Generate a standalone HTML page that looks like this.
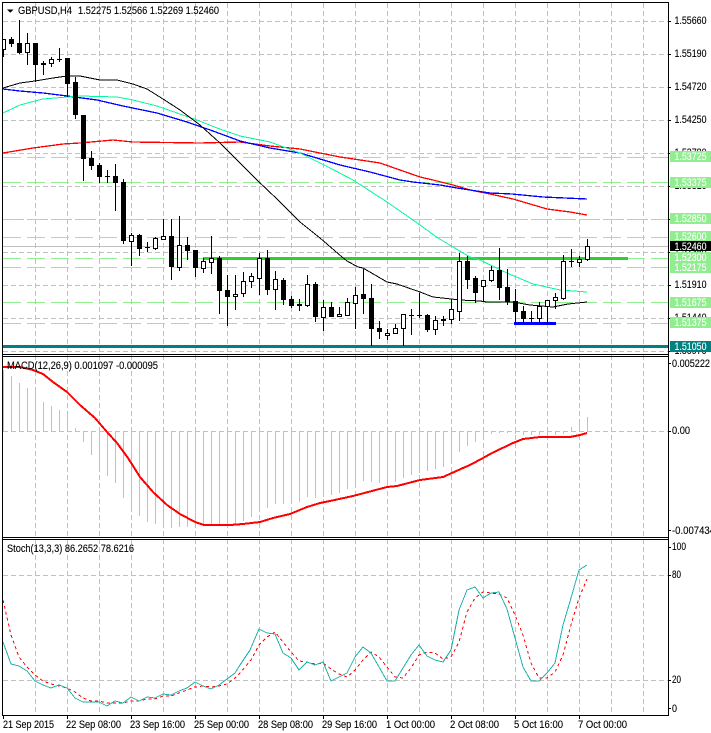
<!DOCTYPE html>
<html lang="en">
<head>
<meta charset="utf-8">
<title>GBPUSD,H4</title>
<style>
html,body{margin:0;padding:0;background:#fff;width:711px;height:733px;overflow:hidden}
svg{display:block}
text{font-family:"Liberation Sans",sans-serif;font-size:11px;fill:#000;stroke:#000;stroke-width:.12px}
text.w{fill:#fff;stroke:#fff}
.c{shape-rendering:crispEdges}
</style>
</head>
<body>
<svg width="711" height="733" viewBox="0 0 711 733" xmlns="http://www.w3.org/2000/svg">
<rect width="711" height="733" fill="#fff"/>

<!-- grid -->
<g class="c" fill="none" stroke="#c0c0c0" stroke-dasharray="5 3">
<path d="M35.5 3V715M67.5 3V715M99.5 3V715M131.5 3V715M163.5 3V715M195.5 3V715M227.5 3V715M259.5 3V715M291.5 3V715M323.5 3V715M355.5 3V715M387.5 3V715M419.5 3V715M451.5 3V715M483.5 3V715M515.5 3V715M547.5 3V715M579.5 3V715M611.5 3V715M643.5 3V715"/>
<path d="M3 21.5H668M3 54.5H668M3 87.5H668M3 120.5H668M3 153.5H668M3 186.5H668M3 219.5H668M3 252.5H668M3 285.5H668M3 318.5H668M3 351.5H668M3 431.5H668M3 575.5H668M3 680.5H668"/>
</g>

<!-- horizontal levels -->
<g class="c" fill="none" stroke="#90ee90" stroke-dasharray="18 6">
<path d="M3 157.5H668M3 182.5H668M3 219.5H668M3 237.5H668M3 258.5H668M3 267.5H668M3 302.5H668M3 323.5H668"/>
</g>
<g class="c">
<rect x="3" y="246" width="665" height="1" fill="#c0c0c0"/>
<rect x="203" y="257" width="425" height="3" fill="#32cd32"/>
<rect x="514" y="322" width="42" height="3" fill="#0000ff"/>
<rect x="3" y="345" width="665" height="3" fill="#008080"/>
</g>

<!-- moving averages -->
<g fill="none" class="c">
<polyline stroke="#ff0000" stroke-width="1.3" points="3,153 33,148 63,144 80,143 113,140 133,142 200,143 240,142 270,146 300,149 340,157 380,163 420,177 433,180 453,185 470,190 490,194 513,199 547,209 570,212 587,215"/>
<polyline stroke="#0000ff" stroke-width="1.3" points="3,89 20,91 43,93 67,96 97,100 123,106 157,113 187,122 213,131 240,141 270,148 300,153 340,165 370,172 400,180 413,182 440,185 457,188 470,190 490,193 512,194 543,197 587,199"/>
<polyline stroke="#00fa9a" stroke-width="1" points="3,113 20,105 43,99 67,97 80,96 117,97 133,100 157,106 177,113 197,120 217,128 240,136 270,142 300,153 330,168 353,180 387,202 413,220 438,238 453,247 470,257 480,260 507,273 533,284 560,290 587,292"/>
<polyline stroke="#000000" stroke-width="1" points="3,88 20,83 35,81 53,78 67,76 80,76 100,80 117,80 133,84 147,89 163,99 180,110 200,125 220,143 240,163 257,180 278,200 300,222 320,238 342,257 347,261 358,267 363,268 387,282 397,284 420,292 433,297 451,299 460,300 480,301 487,302 513,302 530,305 553,307 568,304 587,302"/>
</g>

<!-- candle wicks -->
<path class="c" fill="none" stroke="#000" d="M3.5 39V57M11.5 37V47M19.5 20V54M27.5 33V65M35.5 43V82M43.5 61V75M51.5 57V67M59.5 48V62M67.5 58V97M75.5 77V119M83.5 115V181M91.5 151V170M99.5 163V183M107.5 170V183M115.5 164V211M123.5 179V244M131.5 233V266M139.5 234V256M147.5 242V252M155.5 237V250M163.5 219V240M171.5 219V280M179.5 216V271M187.5 237V260M195.5 250V277M203.5 258V273M211.5 236V274M219.5 256V314M227.5 275V326M235.5 275V310M243.5 272V297M251.5 273V288M259.5 253V295M267.5 250V295M275.5 271V310M283.5 278V305M291.5 296V308M299.5 299V311M307.5 275V307M315.5 282V322M323.5 300V331M331.5 302V317M339.5 307V317M347.5 298V316M355.5 287V329M363.5 269V314M371.5 284V346M379.5 321V339M387.5 329V340M395.5 324V334M403.5 314V346M411.5 309V335M419.5 293V318M427.5 314V332M435.5 316V335M443.5 316V326M451.5 299V324M459.5 253V321M467.5 256V289M475.5 276V303M483.5 280V302M491.5 266V282M499.5 248V300M507.5 269V305M515.5 289V323M523.5 306V324M531.5 311V323M539.5 302V323M547.5 300V323M555.5 293V309M563.5 255V300M571.5 249V267M579.5 256V267M587.5 239V261"/>

<!-- black bodies -->
<path class="c" fill="#000" d="M9 39h5v5h-5zM17 43h5v10h-5zM33 43h5v22h-5zM41 63h5v2h-5zM57 59h5v1h-5zM65 58h5v26h-5zM73 82h5v33h-5zM81 115h5v44h-5zM89 158h5v8h-5zM97 165h5v12h-5zM105 176h5v1h-5zM113 176h5v7h-5zM121 182h5v59h-5zM137 235h5v14h-5zM145 247h5v1h-5zM169 236h5v31h-5zM185 245h5v6h-5zM193 250h5v18h-5zM217 258h5v33h-5zM225 290h5v7h-5zM265 258h5v32h-5zM281 280h5v20h-5zM289 299h5v7h-5zM297 304h5v2h-5zM313 284h5v33h-5zM329 307h5v10h-5zM361 294h5v5h-5zM369 298h5v31h-5zM377 328h5v4h-5zM409 315h5v1h-5zM417 315h5v1h-5zM425 315h5v15h-5zM441 319h5v2h-5zM465 261h5v19h-5zM473 278h5v15h-5zM497 270h5v18h-5zM505 287h5v15h-5zM513 301h5v11h-5zM521 311h5v8h-5zM529 318h5v1h-5zM569 261h5v1h-5z"/>

<!-- white bodies -->
<path class="c" fill="#fff" stroke="#000" d="M2.5 39.5h3v10h-3zM25.5 43.5h4v9h-4zM49.5 59.5h4v4h-4zM129.5 235.5h4v6h-4zM153.5 238.5h4v10h-4zM161.5 236.5h4v3h-4zM177.5 245.5h4v22h-4zM201.5 261.5h4v7h-4zM209.5 258.5h4v4h-4zM233.5 294.5h4v2h-4zM241.5 281.5h4v12h-4zM249.5 276.5h4v5h-4zM257.5 258.5h4v20h-4zM273.5 279.5h4v10h-4zM305.5 284.5h4v21h-4zM321.5 307.5h4v10h-4zM337.5 314.5h4v2h-4zM345.5 302.5h4v13h-4zM353.5 295.5h4v8h-4zM385.5 333.5h4v2h-4zM393.5 328.5h4v5h-4zM401.5 314.5h4v14h-4zM433.5 320.5h4v9h-4zM449.5 309.5h4v10h-4zM457.5 261.5h4v50h-4zM481.5 280.5h4v6h-4zM489.5 270.5h4v10h-4zM537.5 306.5h4v12h-4zM545.5 300.5h4v6h-4zM553.5 297.5h4v3h-4zM561.5 261.5h4v37h-4zM577.5 259.5h4v3h-4zM585.5 246.5h4v13h-4z"/>

<!-- MACD -->
<path class="c" fill="none" stroke="#c0c0c0" d="M3.5 431V370M11.5 431V376M19.5 431V383M27.5 431V388M35.5 431V392M43.5 431V402M51.5 431V406M59.5 431V410M67.5 431V416M75.5 431V428M83.5 431V442M91.5 431V455M99.5 431V467M107.5 431V476M115.5 431V483M123.5 431V498M131.5 431V509M139.5 431V516M147.5 431V522M155.5 431V524M163.5 431V527M171.5 431V528M179.5 431V527M187.5 431V527M195.5 431V526M203.5 431V526M211.5 431V526M219.5 431V526M227.5 431V526M235.5 431V524M243.5 431V521M251.5 431V517M259.5 431V510M267.5 431V508M275.5 431V504M283.5 431V504M291.5 431V503M299.5 431V502M307.5 431V497M315.5 431V498M323.5 431V497M331.5 431V495M339.5 431V493M347.5 431V489M355.5 431V485M363.5 431V481M371.5 431V482M379.5 431V483M387.5 431V485M395.5 431V482M403.5 431V478M411.5 431V475M419.5 431V473M427.5 431V471M435.5 431V469M443.5 431V467M451.5 431V463M459.5 431V452M467.5 431V446M475.5 431V442M483.5 431V436M491.5 431V434M499.5 431V433M507.5 431V433M515.5 431V434M523.5 431V435M531.5 431V435M539.5 431V435M547.5 431V436M555.5 431V435M563.5 431V434M571.5 431V427M579.5 431V422M587.5 431V417"/>
<polyline class="c" fill="none" stroke="#ff0000" stroke-width="2" points="3,367 20,367 33,370 43,374 53,382 67,392 80,405 95,418 107,432 117,443 128,458 140,477 153,492 167,505 180,514 195,522 204,525 230,525 243,524 260,522 273,518 290,514 307,507 320,503 330,501 353,496 387,487 397,486 420,480 443,477 463,468 470,465 483,458 492,453 513,443 523,439 540,437 570,437 580,435 587,433"/>

<!-- Stochastic -->
<polyline class="c" fill="none" stroke="#ff0000" stroke-dasharray="3 3" points="3,600 11,635 19,657 27,667 35,675 43,681 51,684 59,686 67,688 75,692 83,698 91,701 99,701 107,703 115,703 123,703 131,701 139,701 147,699 155,699 163,696 171,696 179,693 187,690 195,687 203,686 211,687 219,686 227,684 235,678 240,673 251,660 259,645 267,637 275,632 283,642 291,652 299,661 307,662 315,664 323,663 331,669 339,674 347,677 355,670 363,660 371,652 379,657 387,667 395,677 403,678 411,668 419,655 427,652 435,653 443,659 451,657 459,642 467,612 475,598 483,592 491,593 499,594 507,598 515,615 523,635 531,663 539,678 547,678 555,672 563,655 571,625 579,598 587,579"/>
<polyline class="c" fill="none" stroke="#20b2aa" points="3,642 11,664 19,666 27,671 35,681 43,685 51,688 59,685 67,688 75,698 83,702 91,702 99,702 107,706 115,701 123,703 131,697 139,701 147,697 155,698 163,694 171,695 179,691 187,688 195,682 203,686 211,689 219,685 227,679 235,673 240,665 250,650 259,629 267,633 275,634 283,653 291,658 299,670 307,662 315,665 323,662 331,681 339,677 347,673 355,657 363,647 371,653 379,667 387,681 395,681 403,668 411,655 419,645 427,656 435,660 443,662 451,650 459,610 467,590 475,587 483,598 491,593 499,592 507,609 515,638 523,667 531,681 539,681 547,673 555,663 563,625 571,598 579,570 587,565"/>

<!-- frames -->
<path class="c" fill="none" stroke="#000" d="M2.5 2.5H668.5V715.5H2.5ZM2 354.5H668M2 356.5H668M2 537.5H668M2 539.5H668"/>
<path class="c" fill="none" stroke="#000" d="M668 21.5h3M668 54.5h3M668 87.5h3M668 120.5h3M668 153.5h3M668 186.5h3M668 219.5h3M668 252.5h3M668 285.5h3M668 318.5h3M668 351.5h3M668 363.5h3M668 431.5h3M668 530.5h3M668 547.5h3M668 575.5h3M668 680.5h3M668 708.5h3M3.5 715V719M67.5 715V719M131.5 715V719M195.5 715V719M259.5 715V719M323.5 715V719M387.5 715V719M451.5 715V719M515.5 715V719M579.5 715V719"/>

<!-- headers -->
<path d="M7 9.5h6.5l-3.2 3.2z" fill="#000"/>
<text x="18" y="14" textLength="54" lengthAdjust="spacingAndGlyphs">GBPUSD,H4</text>
<text x="78" y="14" textLength="141" lengthAdjust="spacingAndGlyphs">1.52275 1.52566 1.52269 1.52460</text>
<text x="7" y="369" textLength="151" lengthAdjust="spacingAndGlyphs">MACD(12,26,9) 0.001097 -0.000095</text>
<text x="7" y="552" textLength="127" lengthAdjust="spacingAndGlyphs">Stoch(13,3,3) 86.2652 78.6216</text>

<!-- price axis -->
<g>
<text x="674.5" y="24" textLength="32" lengthAdjust="spacingAndGlyphs">1.55660</text>
<text x="674.5" y="57" textLength="32" lengthAdjust="spacingAndGlyphs">1.55190</text>
<text x="674.5" y="90" textLength="32" lengthAdjust="spacingAndGlyphs">1.54720</text>
<text x="674.5" y="123" textLength="32" lengthAdjust="spacingAndGlyphs">1.54250</text>
<text x="674.5" y="156" textLength="32" lengthAdjust="spacingAndGlyphs">1.53780</text>
<text x="674.5" y="189" textLength="32" lengthAdjust="spacingAndGlyphs">1.53310</text>
<text x="674.5" y="255" textLength="32" lengthAdjust="spacingAndGlyphs">1.52380</text>
<text x="674.5" y="288" textLength="32" lengthAdjust="spacingAndGlyphs">1.51910</text>
<text x="674.5" y="321" textLength="32" lengthAdjust="spacingAndGlyphs">1.51440</text>
<text x="674.5" y="354" textLength="32" lengthAdjust="spacingAndGlyphs">1.50970</text>
</g>
<g class="c">
<rect x="670" y="151" width="41" height="11" fill="#90ee90"/>
<rect x="670" y="177" width="41" height="11" fill="#90ee90"/>
<rect x="670" y="213" width="41" height="11" fill="#90ee90"/>
<rect x="670" y="231" width="41" height="11" fill="#90ee90"/>
<rect x="670" y="252" width="41" height="11" fill="#90ee90"/>
<rect x="670" y="262" width="41" height="11" fill="#90ee90"/>
<rect x="670" y="297" width="41" height="11" fill="#90ee90"/>
<rect x="670" y="317" width="41" height="11" fill="#90ee90"/>
<rect x="670" y="241" width="41" height="10" fill="#000"/>
<rect x="670" y="341" width="41" height="11" fill="#008080"/>
</g>
<g>
<text class="w" x="674.5" y="160" textLength="32" lengthAdjust="spacingAndGlyphs">1.53725</text>
<text class="w" x="674.5" y="186" textLength="32" lengthAdjust="spacingAndGlyphs">1.53375</text>
<text class="w" x="674.5" y="222" textLength="32" lengthAdjust="spacingAndGlyphs">1.52850</text>
<text class="w" x="674.5" y="240" textLength="32" lengthAdjust="spacingAndGlyphs">1.52600</text>
<text class="w" x="674.5" y="250" textLength="32" lengthAdjust="spacingAndGlyphs">1.52460</text>
<text class="w" x="674.5" y="261" textLength="32" lengthAdjust="spacingAndGlyphs">1.52300</text>
<text class="w" x="674.5" y="271" textLength="32" lengthAdjust="spacingAndGlyphs">1.52175</text>
<text class="w" x="674.5" y="306" textLength="32" lengthAdjust="spacingAndGlyphs">1.51675</text>
<text class="w" x="674.5" y="326" textLength="32" lengthAdjust="spacingAndGlyphs">1.51375</text>
<text class="w" x="674.5" y="350" textLength="32" lengthAdjust="spacingAndGlyphs">1.51050</text>
</g>

<!-- indicator axes -->
<text x="672" y="367" textLength="38" lengthAdjust="spacingAndGlyphs">0.005222</text>
<text x="672" y="434" textLength="18" lengthAdjust="spacingAndGlyphs">0.00</text>
<text x="672" y="534" textLength="43" lengthAdjust="spacingAndGlyphs">-0.007434</text>
<text x="672" y="550" textLength="14" lengthAdjust="spacingAndGlyphs">100</text>
<text x="672" y="578" textLength="9" lengthAdjust="spacingAndGlyphs">80</text>
<text x="672" y="683" textLength="9" lengthAdjust="spacingAndGlyphs">20</text>
<text x="672" y="712" textLength="5" lengthAdjust="spacingAndGlyphs">0</text>

<!-- time axis -->
<text x="3" y="728" textLength="51" lengthAdjust="spacingAndGlyphs">21 Sep 2015</text>
<text x="66" y="728" textLength="55" lengthAdjust="spacingAndGlyphs">22 Sep 08:00</text>
<text x="130" y="728" textLength="55" lengthAdjust="spacingAndGlyphs">23 Sep 16:00</text>
<text x="194" y="728" textLength="55" lengthAdjust="spacingAndGlyphs">25 Sep 00:00</text>
<text x="258" y="728" textLength="55" lengthAdjust="spacingAndGlyphs">28 Sep 08:00</text>
<text x="322" y="728" textLength="55" lengthAdjust="spacingAndGlyphs">29 Sep 16:00</text>
<text x="386" y="728" textLength="49" lengthAdjust="spacingAndGlyphs">1 Oct 00:00</text>
<text x="450" y="728" textLength="49" lengthAdjust="spacingAndGlyphs">2 Oct 08:00</text>
<text x="514" y="728" textLength="49" lengthAdjust="spacingAndGlyphs">5 Oct 16:00</text>
<text x="578" y="728" textLength="49" lengthAdjust="spacingAndGlyphs">7 Oct 00:00</text>
</svg>
</body>
</html>
